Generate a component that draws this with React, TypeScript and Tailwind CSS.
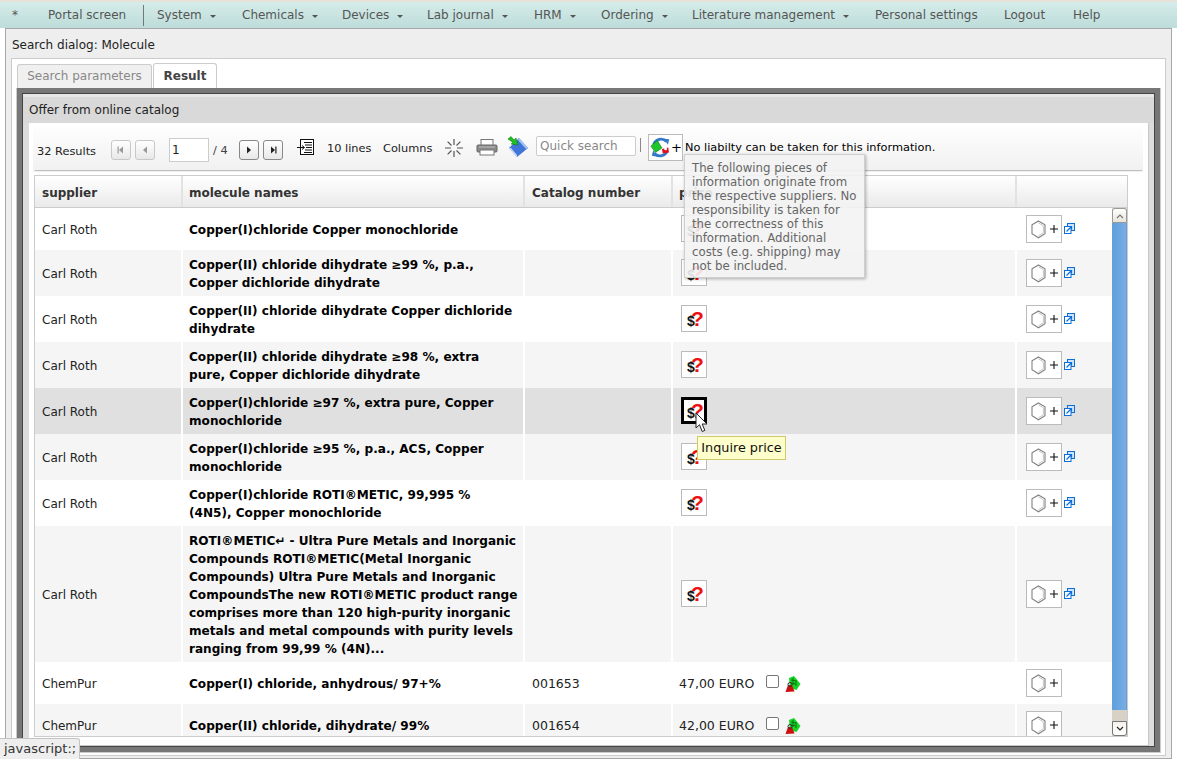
import React from "react";

function PriceIcon({ active }: { active?: boolean }) {
  return (
    <span className={`inline-flex w-[26px] h-[27px] -mt-[2px] bg-white border ${active ? "border-black shadow-[inset_0_0_0_2px_#000]" : "border-[#bbbbbb]"}`}>
      <svg width="24" height="25" viewBox="0 0 24 25">
        <text x="9" y="20" fontSize="21" fontWeight="700" fontFamily="'Liberation Sans', sans-serif" fill="#ee1111">?</text>
        <text x="5" y="20" fontSize="14" fontWeight="700" fontFamily="'Liberation Sans', sans-serif" fill="#111">$</text>
      </svg>
    </span>
  );
}

function Hexagon() {
  return (
    <svg width="15" height="19" viewBox="0 0 15 19">
      <path d="M7.5 1 L14 4.8 V13.7 L7.5 17.8 L1 13.7 V4.8 Z" fill="none" stroke="#808080" strokeWidth="1.1" />
      <path d="M7.5 2.8 L12.4 5.8 V12.8 L7.5 15.8" fill="none" stroke="#c6c6c6" strokeWidth="1" />
    </svg>
  );
}

function StructureBtn() {
  return (
    <span className="inline-flex items-center justify-center gap-[4px] w-[36px] h-[28px] border border-[#bbbbbb] bg-white">
      <Hexagon />
      <svg width="8" height="8" viewBox="0 0 8 8">
        <path d="M4 0 V8 M0 4 H8" stroke="#111" strokeWidth="1.1" />
      </svg>
    </span>
  );
}

function LinkIcon() {
  return (
    <svg width="11" height="11" viewBox="0 0 11 11" className="ml-[2px] -mt-[1px]">
      <rect x="3.5" y="0.5" width="7" height="7" fill="#cfe4fb" stroke="#0a6fd8" />
      <rect x="0.5" y="3.5" width="6.5" height="7" fill="#fff" stroke="#0a6fd8" />
      <path d="M2.5 8.5 L7 4 M4.5 3.5 H7.5 V6.5" fill="none" stroke="#0a6fd8" strokeWidth="1.2" />
    </svg>
  );
}

function CartIcon() {
  return (
    <svg width="16" height="18" viewBox="0 0 16 18">
      <path d="M4 3 L9 1 L15.5 9 L11.5 15 L5 13 Z" fill="#14d424" />
      <path d="M6 5 L11 6 M6 8 L11 9 M8 3 L8 10 M11 5 L11 11" stroke="#0b6b12" strokeWidth="0.9" />
      <path d="M0.5 17 L3 10 H7 L9.5 16.5 Z" fill="#cc1010" />
      <circle cx="5" cy="9.5" r="2" fill="none" stroke="#333" strokeWidth="1" />
    </svg>
  );
}

function PagerBtn({ dir, edge, off }: { dir: "l" | "r"; edge?: boolean; off?: boolean }) {
  const c = off ? "#999" : "#222";
  return (
    <span className={`inline-flex items-center justify-center w-[20px] h-[20px] rounded-[3px] border ${off ? "border-[#c8c8c8]" : "border-[#888888]"} bg-gradient-to-b from-white to-[#e8e8e8]`}>
      <svg width="10" height="10" viewBox="0 0 10 10">
        {dir === "l" ? <path d="M7 1.5 V8.5 L3 5 Z" fill={c} /> : <path d="M3 1.5 V8.5 L7 5 Z" fill={c} />}
        {edge && (dir === "l" ? <rect x="1.5" y="1.5" width="1.2" height="7" fill={c} /> : <rect x="7.3" y="1.5" width="1.2" height="7" fill={c} />)}
      </svg>
    </span>
  );
}

const rows: { s: string; n: string[]; c?: string; p?: string; h: number; hover?: boolean }[] = [
  { s: "Carl Roth", n: ["Copper(I)chloride Copper monochloride"], h: 42 },
  { s: "Carl Roth", n: ["Copper(II) chloride dihydrate ≥99 %, p.a.,", "Copper dichloride dihydrate"], h: 46 },
  { s: "Carl Roth", n: ["Copper(II) chloride dihydrate Copper dichloride", "dihydrate"], h: 46 },
  { s: "Carl Roth", n: ["Copper(II) chloride dihydrate ≥98 %, extra", "pure, Copper dichloride dihydrate"], h: 46 },
  { s: "Carl Roth", n: ["Copper(I)chloride ≥97 %, extra pure, Copper", "monochloride"], h: 46, hover: true },
  { s: "Carl Roth", n: ["Copper(I)chloride ≥95 %, p.a., ACS, Copper", "monochloride"], h: 46 },
  { s: "Carl Roth", n: ["Copper(I)chloride ROTI®METIC, 99,995 %", "(4N5), Copper monochloride"], h: 46 },
  {
    s: "Carl Roth",
    n: [
      "ROTI®METIC↵ - Ultra Pure Metals and Inorganic",
      "Compounds ROTI®METIC(Metal Inorganic",
      "Compounds) Ultra Pure Metals and Inorganic",
      "CompoundsThe new ROTI®METIC product range",
      "comprises more than 120 high-purity inorganic",
      "metals and metal compounds with purity levels",
      "ranging from 99,99 % (4N)...",
    ],
    h: 136,
  },
  { s: "ChemPur", n: ["Copper(I) chloride, anhydrous/ 97+%"], c: "001653", p: "47,00 EURO", h: 42 },
  { s: "ChemPur", n: ["Copper(II) chloride, dihydrate/ 99%"], c: "001654", p: "42,00 EURO", h: 42 },
];

const menu: [string, number][] = [
  ["System", 85],
  ["Chemicals", 100],
  ["Devices", 85],
  ["Lab journal", 107],
  ["HRM", 67],
  ["Ordering", 91],
  ["Literature management", 183],
];

export default function App() {
  return (
    <div className="relative h-[759px] w-[1177px] overflow-hidden bg-white text-[12px] text-[#222222] font-['DejaVu_Sans',sans-serif] flex flex-col">
      {/* menu bar */}
      <nav className="h-[28px] shrink-0 flex items-center border-t-2 border-[#e6e2da] bg-gradient-to-b from-[#d5ecea] to-[#bddcd9] text-[#555555] pl-[12px]">
        <span className="w-[36px]">*</span>
        <span className="w-[95px]">Portal screen</span>
        <span className="w-px h-[21px] bg-[#777777] mr-[13px]" />
        {menu.map(([t, w]) => (
          <span key={t} className="flex items-center" style={{ width: w }}>
            {t}
            <span className="ml-[8px] mt-[2px] w-0 h-0 border-l-[3.5px] border-r-[3.5px] border-t-[3.5px] border-l-transparent border-r-transparent border-t-[#555555]" />
          </span>
        ))}
        <span className="w-[122px] whitespace-nowrap">Personal settings</span>
        <span className="pl-[7px] w-[76px]">Logout</span>
        <span>Help</span>
      </nav>

      {/* page panel */}
      <div className="flex-1 min-h-0 ml-[5px] mr-[5px] mb-0 flex flex-col border border-[#a8a8a8] bg-[#eeeeee]">
        <div className="h-[29px] shrink-0 flex items-center pl-[6px] pt-[3px]">Search dialog: Molecule</div>
        <div className="flex-1 min-h-0 mx-[5px] mb-[2px] border border-[#cccccc] bg-white px-[4px] pt-[5px] pb-[2px] flex flex-col">
          {/* tabs */}
          <div className="h-[24px] shrink-0 flex items-end gap-[1px] pl-[1px]">
            <span className="h-[24px] w-[135px] flex items-center justify-center pb-[2px] rounded-t-[3px] border border-b-0 border-[#cccccc] bg-[#f0f0f0] text-[#888888]">Search parameters</span>
            <span className="h-[25px] w-[64px] flex items-center justify-center pb-[1px] rounded-t-[3px] border border-b-0 border-[#cccccc] bg-white font-bold text-[#444444]">Result</span>
          </div>
          {/* frame */}
          <div className="flex-1 min-h-0 border-x border-b border-[#cccccc]">
            <div className="h-full border-[6px] border-[#777777]">
              <div className="h-full bg-[#dcdcdc] flex flex-col shadow-[-1px_-1px_0_#444444,1px_-1px_0_#444444,1px_1px_0_#444444]">
                <div className="h-[29px] shrink-0 flex items-center pl-[6px] bg-[#d9d9d9] border-t-[3px] border-[#e6e6e6]">Offer from online catalog</div>
                <div className="flex-1 min-h-0 bg-white ml-[6px] mr-[5px] border-r border-b border-[#c8c8c8] flex flex-col">
                  {/* toolbar */}
                  <div className="h-[48px] mt-[1px] shrink-0 ml-[4px] mr-[5px] bg-gradient-to-b from-white to-[#f0f0f0] flex items-center text-[11.35px] pl-[4px] relative">
                    <span className="w-[74px] pt-[7px]">32 Results</span>
                    <span className="flex gap-[4px] pt-[4px]">
                      <PagerBtn dir="l" edge off />
                      <PagerBtn dir="l" off />
                    </span>
                    <span className="ml-[14px] mt-[4px] w-[40px] h-[24px] border border-[#cccccc] bg-white flex items-center pl-[2px] text-[12px]">1</span>
                    <span className="ml-[4px] w-[26px] pt-[5px] text-[#444444]">/ 4</span>
                    <span className="flex gap-[4px] pt-[4px]">
                      <PagerBtn dir="r" />
                      <PagerBtn dir="r" edge />
                    </span>
                    <svg width="18" height="18" viewBox="0 0 18 18" className="ml-[14px] -mt-[1px]">
                      <rect x="3.5" y="0.5" width="13" height="15" fill="#fff" stroke="#111" />
                      <path d="M7 3.5 H15 M8 6 H15 M9 8.5 H15 M8 11 H15 M7 13.5 H15" stroke="#111" />
                      <path d="M0 8.5 H7 M5 6.5 L7.5 8.5 L5 10.5" stroke="#111" fill="none" />
                    </svg>
                    <span className="ml-[12px] w-[56px] pt-[2px]">10 lines</span>
                    <span className="w-[61px] pt-[2px]">Columns</span>
                    <svg width="20" height="20" viewBox="0 0 20 20">
                      <path d="M10 1 V7 M10 13 V19 M1 10 H7 M13 10 H19 M3.6 3.6 L7.5 7.5 M12.5 12.5 L16.4 16.4 M3.6 16.4 L7.5 12.5 M12.5 7.5 L16.4 3.6" stroke="#555" strokeWidth="1.2" />
                    </svg>
                    <svg width="22" height="20" viewBox="0 0 22 20" className="ml-[12px]">
                      <rect x="5" y="1.5" width="12" height="7" fill="#fff" stroke="#777" />
                      <rect x="1" y="7" width="20" height="7" rx="1" fill="#8b8b8b" stroke="#666" />
                      <rect x="4" y="12" width="14" height="5" fill="#fff" stroke="#777" />
                      <path d="M3 9 H19" stroke="#bdbdbd" />
                    </svg>
                    <svg width="22" height="22" viewBox="0 0 22 22" className="ml-[9px] -mt-[2px]">
                      <path d="M2 12 L12 2 L21 12 L10 21 Z" fill="#3f74d8" />
                      <path d="M12 2 L21 12 L19 13 L11 4 Z" fill="#a9c4f2" />
                      <path d="M2 12 L10 21 L10 19 L4 12 Z" fill="#cfdcf7" />
                      <path d="M1 3 L4 0.5 L7 4 L9 2 L11 9 L4 8 L6 6.5 Z" fill="#19c21f" stroke="#0a6b10" strokeWidth="0.5" />
                    </svg>
                    <span className="ml-[7px] -mt-[4px] w-[100px] h-[20px] border border-[#cccccc] rounded-[2px] bg-white flex items-center pl-[3px] text-[12px] text-[#888888]">Quick search</span>
                    <span className="ml-[4px] -mt-[6px] w-px h-[14px] bg-[#888888]" />
                    <span className="ml-[7px] -mt-[1px] w-[35px] h-[27px] border border-[#bbbbbb] bg-white flex items-center pl-[1px]">
                      <svg width="23" height="23" viewBox="0 0 23 23">
                        <path d="M4 8 A8.5 8.5 0 0 1 18 5" fill="none" stroke="#3478c8" strokeWidth="3" />
                        <path d="M15 2 L21 2.5 L19.5 8.5 Z" fill="#3478c8" />
                        <path d="M19 15 A8.5 8.5 0 0 1 5 18" fill="none" stroke="#3478c8" strokeWidth="3" />
                        <path d="M8 21.5 L2 20.5 L3.5 14.5 Z" fill="#3478c8" />
                        <path d="M1 10 L8 4 L13 12 L6 17 Z" fill="#1cc82c" stroke="#0a6b10" strokeWidth="0.6" />
                        <path d="M13 13 L20 11.5 L20.5 17 L14 18 Z" fill="#e01020" />
                        <circle cx="17" cy="13" r="1.6" fill="#fff" />
                      </svg>
                      <span className="text-[13px] leading-none text-black -mt-[1px]">+</span>
                    </span>
                    <span className="ml-[2px] text-black -mt-[1px]">No liabilty can be taken for this information.</span>
                    <span className="absolute left-[2px] right-[1px] bottom-[1px] h-[1px] bg-[#bfbfbf]" />
                  </div>

                  {/* table */}
                  <div className="h-[562px] shrink-0 mt-[3px] ml-[5px] w-[1094px] border-x border-b border-[#cccccc] flex flex-col overflow-hidden">
                    <div className="h-[33px] shrink-0 grid grid-cols-[148px_342px_148px_344px_110px] border-y border-[#cccccc] bg-gradient-to-b from-white to-[#eaeaea] font-bold text-[#333333]">
                      {["supplier", "molecule names", "Catalog number", "price", ""].map((t, i) => (
                        <div key={t} className={`flex items-center pt-[3px] border-r-2 last:border-r-0 border-[#e2e2e2] ${i === 0 || i === 2 ? "pl-[7px]" : "pl-[6px]"}`}>{t}</div>
                      ))}
                    </div>
                    <div className="flex-1 min-h-0 flex overflow-hidden">
                      <div className="flex-1 min-w-0 overflow-hidden">
                        {rows.map((r, i) => (
                          <div
                            key={i}
                            style={{ height: r.h }}
                            className={`grid grid-cols-[148px_342px_148px_344px_95px] leading-[18px] ${r.hover ? "bg-[#e0e0e0]" : i % 2 === 1 ? "bg-[#f5f5f5]" : "bg-white"}`}
                          >
                            <div className="flex items-center pl-[7px] pt-[1px] border-r-2 border-white">{r.s}</div>
                            <div className="flex flex-col justify-center pl-[6px] pt-[1px] text-[12.09px] font-bold text-black border-r-2 border-white whitespace-nowrap">
                              {r.n.map((l) => (
                                <span key={l}>{l}</span>
                              ))}
                            </div>
                            <div className="flex items-center pl-[7px] pt-[1px] text-[12.5px] border-r-2 border-white">{r.c}</div>
                            <div className="flex items-center pl-[6px] border-r-2 border-white">
                              {r.p ? (
                                <>
                                  <span className="w-[87px] pt-[1px] text-[12.5px]">{r.p}</span>
                                  <span className="w-[13px] h-[13px] -mt-[3px] rounded-[2px] border border-[#777777] bg-white" />
                                  <span className="ml-[6px] mt-[2px] flex"><CartIcon /></span>
                                </>
                              ) : (
                                <span className="ml-[2px] flex"><PriceIcon active={r.hover} /></span>
                              )}
                            </div>
                            <div className="flex items-center pl-[9px]">
                              <StructureBtn />
                              {!r.p && <LinkIcon />}
                            </div>
                          </div>
                        ))}
                      </div>
                      {/* scrollbar */}
                      <div className="w-[15px] shrink-0 flex flex-col bg-[#d8d2c6]">
                        <div className="h-[15px] shrink-0 rounded-t-[3px] border border-[#999999] bg-gradient-to-b from-white to-[#e8e4da] flex items-center justify-center">
                          <svg width="8" height="6" viewBox="0 0 8 6"><path d="M1 5 L4 2 L7 5" fill="none" stroke="#777" strokeWidth="1.2" /></svg>
                        </div>
                        <div className="flex-1 bg-gradient-to-r from-[#5f9fdc] to-[#78aee6] border-x border-[#6a9ed4]" />
                        <div className="h-[11px] shrink-0" />
                        <div className="h-[15px] shrink-0 rounded-b-[3px] border border-[#777777] bg-gradient-to-b from-[#f4f2ec] to-white flex items-center justify-center">
                          <svg width="8" height="6" viewBox="0 0 8 6"><path d="M1 1 L4 4 L7 1" fill="none" stroke="#222" strokeWidth="1.2" /></svg>
                        </div>
                      </div>
                    </div>
                  </div>
                </div>
              </div>
            </div>
          </div>
        </div>
      </div>

      {/* liability tooltip */}
      <div className="absolute left-[684px] top-[154px] w-[181px] h-[124px] bg-[#f3f3f3]/90 border border-[#cfcfcf] shadow-[1px_1px_3px_rgba(0,0,0,0.3)] pl-[7px] pt-[6px] text-[11.75px] leading-[14px] text-[#666666] whitespace-nowrap">
        <div>The following pieces of</div>
        <div>information originate from</div>
        <div>the respective suppliers. No</div>
        <div>responsibility is taken for</div>
        <div>the correctness of this</div>
        <div>information. Additional</div>
        <div>costs (e.g. shipping) may</div>
        <div>not be included.</div>
      </div>

      {/* inquire price tooltip */}
      <div className="absolute left-[697px] top-[436px] w-[89px] h-[24px] bg-[#ffffcc] border border-[#cfc96a] flex items-center justify-center text-[12.8px] text-[#111111]">Inquire price</div>

      {/* cursor */}
      <svg width="13" height="21" viewBox="0 0 13 21" className="absolute left-[695px] top-[412px]">
        <path d="M1 1 V16 L4.5 12.7 L7.2 19.5 L9.8 18.4 L7.2 12 H12 Z" fill="#fff" stroke="#222" strokeWidth="1" />
      </svg>

      {/* status */}
      <div className="absolute left-0 top-[738px] w-[80px] h-[21px] rounded-tr-[3px] bg-[#eeeeee] border-t border-r border-[#c4c4c4] flex items-center pl-[4px] text-[13px] text-[#333333]">javascript:;</div>
    </div>
  );
}
